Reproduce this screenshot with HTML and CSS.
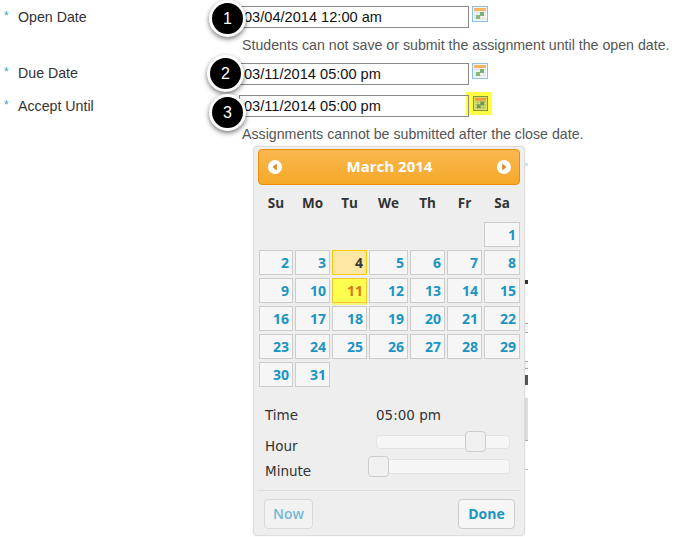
FILE: index.html
```html
<!DOCTYPE html>
<html>
<head>
  <meta charset="utf-8">
  <title>Assignment dates</title>
  <link rel="stylesheet" href="styles.css">
</head>
<body>
  <div class="form">
    <div class="row row-open">
      <div class="label"><span class="req">*</span>Open Date</div>
      <div class="field">
        <span class="date-box">03/04/2014 12:00 am</span>
        <svg class="cal-icon" viewBox="0 0 16 16"><use href="#cal"/></svg>
        <span class="callout callout-1">1</span>
      </div>
    </div>
    <p class="hint hint-open">Students can not save or submit the assignment until the open date.</p>

    <div class="row row-due">
      <div class="label"><span class="req">*</span>Due Date</div>
      <div class="field">
        <span class="date-box">03/11/2014 05:00 pm</span>
        <svg class="cal-icon" viewBox="0 0 16 16"><use href="#cal"/></svg>
        <span class="callout callout-2">2</span>
      </div>
    </div>

    <div class="row row-accept">
      <div class="label"><span class="req">*</span>Accept Until</div>
      <div class="field">
        <span class="date-box">03/11/2014 05:00 pm</span>
        <span class="cal-active"><svg class="cal-icon" viewBox="0 0 16 16"><use href="#cal-hot"/></svg></span>
        <span class="callout callout-3">3</span>
      </div>
    </div>
    <p class="hint hint-accept">Assignments cannot be submitted after the close date.</p>
  </div>

  <div class="peek"></div>

  <div class="picker">
    <div class="picker-head">
      <span class="nav"><svg viewBox="0 0 14 14"><circle cx="7" cy="7" r="7" fill="#fff"/><path d="M8.8 3.6v6.8L4.6 7z" fill="#d98a1c"/></svg></span>
      <span class="month">March 2014</span>
      <span class="nav"><svg viewBox="0 0 14 14"><circle cx="7" cy="7" r="7" fill="#fff"/><path d="M5.2 3.6v6.8L9.4 7z" fill="#d98a1c"/></svg></span>
    </div>

    <div class="weekdays">
      <span>Su</span><span>Mo</span><span>Tu</span><span>We</span><span>Th</span><span>Fr</span><span>Sa</span>
    </div>

    <div class="days">
      <span class="day day-first">1</span>
      <span class="day">2</span><span class="day">3</span><span class="day open-day">4</span><span class="day">5</span><span class="day">6</span><span class="day">7</span><span class="day">8</span>
      <span class="day">9</span><span class="day">10</span><span class="day today">11</span><span class="day">12</span><span class="day">13</span><span class="day">14</span><span class="day">15</span>
      <span class="day">16</span><span class="day">17</span><span class="day">18</span><span class="day">19</span><span class="day">20</span><span class="day">21</span><span class="day">22</span>
      <span class="day">23</span><span class="day">24</span><span class="day">25</span><span class="day">26</span><span class="day">27</span><span class="day">28</span><span class="day">29</span>
      <span class="day">30</span><span class="day">31</span>
    </div>

    <div class="time-row">
      <span class="time-label">Time</span>
      <span class="time-value">05:00 pm</span>
    </div>
    <div class="slider-row slider-hour">
      <span class="time-label">Hour</span>
      <span class="slider"><span class="thumb thumb-hour"></span></span>
    </div>
    <div class="slider-row slider-minute">
      <span class="time-label">Minute</span>
      <span class="slider"><span class="thumb thumb-minute"></span></span>
    </div>

    <div class="picker-foot">
      <span class="btn btn-now">Now</span>
      <span class="btn btn-done">Done</span>
    </div>
  </div>

  <svg class="defs" width="0" height="0">
    <symbol id="cal" viewBox="0 0 16 16">
      <rect x="0.5" y="0.5" width="15" height="15" fill="#f0f6fb" stroke="#8fc0ea"/>
      <rect x="2" y="2" width="12" height="3" fill="#f9b261"/>
      <path d="M2 6.5h12M2 9.5h12M2 12.5h12M5 5v9M8 5v9M11 5v9" stroke="#dfe4e6" stroke-width="1" fill="none"/>
      <rect x="4" y="9" width="4" height="4" fill="#86bb7c"/>
      <rect x="8" y="6" width="4" height="4" fill="#7cb372"/>
    </symbol>
    <symbol id="cal-hot" viewBox="0 0 16 16">
      <rect x="0.5" y="0.5" width="15" height="15" fill="#dde270" stroke="#7c9440"/>
      <rect x="2" y="2" width="12" height="3" fill="#f09a38"/>
      <path d="M2 6.5h12M2 9.5h12M2 12.5h12M5 5v9M8 5v9M11 5v9" stroke="#b9bb62" stroke-width="1" fill="none"/>
      <rect x="4" y="9" width="4" height="4" fill="#6a9c50"/>
      <rect x="8" y="6" width="4" height="4" fill="#6a9c50"/>
    </symbol>
  </svg>
</body>
</html>
```

FILE: styles.css
```css
html, body {
  margin: 0;
  padding: 0;
  height: 537px;
  overflow: hidden;
  background-color: #fff;
}
body {
  font-family: "Liberation Sans", Arial, sans-serif;
  font-size: 14.2px;
  color: #333;
  position: relative;
}
.defs {
  position: absolute;
}
.form {
  padding-top: 6px;
}
.row {
  display: flex;
  height: 22px;
  position: relative;
}
.row-due {
  margin-top: 10px;
}
.row-accept {
  margin-top: 10px;
}
.label {
  width: 239px;
  padding-left: 4px;
  box-sizing: border-box;
  line-height: 22px;
  color: #333;
}
.row-due .label {
  margin-top: -1px;
}
.req {
  display: inline-block;
  width: 14px;
  color: #3aa0d8;
  font-size: 12px;
  position: relative;
  top: -2px;
}
.field {
  display: flex;
  align-items: flex-start;
}
.date-box {
  position: relative;
  z-index: 1;
  width: 230px;
  height: 22px;
  box-sizing: border-box;
  border: 1px solid #8a8a8a;
  padding-left: 4px;
  font-size: 14.6px;
  line-height: 21px;
  color: #111;
}
.cal-icon {
  width: 16px;
  height: 16px;
  display: block;
  margin-left: 3px;
}
.cal-active {
  display: block;
  width: 26px;
  height: 23px;
  box-sizing: border-box;
  background: #ffff40;
  padding: 4px 0 0 7px;
  margin-top: -3px;
  margin-left: -3px;
}
.cal-active .cal-icon {
  margin-left: 0;
  width: 15px;
  height: 15px;
}
.callout {
  position: absolute;
  z-index: 2;
  width: 31px;
  height: 31px;
  border-radius: 50%;
  background: #000;
  border: 3px solid #fff;
  box-shadow: 0 2px 5px rgba(0,0,0,0.55);
  color: #fff;
  font-size: 16px;
  line-height: 31px;
  text-align: center;
}
.callout-1 { left: 209px; top: -6px; }
.callout-2 { left: 207px; top: -8px; }
.callout-3 { left: 209px; top: -1px; }
.hint {
  margin: 0;
  padding-left: 242px;
  line-height: 16px;
  color: #555;
  white-space: nowrap;
}
.hint-open {
  margin-top: 9px;
}
.hint-accept {
  margin-top: 9px;
}
.peek {
  position: absolute;
  left: 525px;
  top: 160px;
  width: 3px;
  height: 315px;
  background: linear-gradient(#fff 0 3px, #cfe6f5 3px 6px, #fff 6px 120px, #333 120px 124px, #fff 124px 163px, #aaa 163px 164px, #f4f4f4 164px 172px, #aaa 172px 173px, #fff 173px 201px, #aaa 201px 202px, #f4f4f4 202px 208px, #aaa 208px 209px, #fff 209px 215px, #555 215px 225px, #fff 225px 238px, #ddd 238px 280px, #aaa 280px 281px, #fff 281px 309px, #bbb 309px 310px, #fff 310px);
}
.picker {
  position: absolute;
  left: 253px;
  top: 146px;
  width: 272px;
  height: 390px;
  box-sizing: border-box;
  background: #eee;
  border: 1px solid #ddd;
  border-radius: 4px;
  padding: 2px 4px 0 4px;
  font-family: "DejaVu Sans", sans-serif;
  box-shadow: 0 0 2px rgba(0,0,0,0.1);
}
.picker-head {
  height: 36px;
  box-sizing: border-box;
  display: flex;
  align-items: center;
  justify-content: space-between;
  padding: 0 8px 0 9px;
  background: linear-gradient(#fbb850, #f6a828);
  border: 1px solid #e78f08;
  border-radius: 4px;
}
.nav svg {
  width: 14px;
  height: 14px;
  display: block;
}
.month {
  color: #fff;
  font-family: "Open Sans", sans-serif;
  font-weight: bold;
  font-size: 15px;
  padding-bottom: 2px;
}
.weekdays, .days {
  display: grid;
  grid-template-columns: 34px 35px 35px 39px 35px 35px 36px;
  column-gap: 2px;
  margin-left: 1px;
}
.weekdays {
  height: 37px;
  box-sizing: border-box;
  padding-bottom: 2px;
  align-items: center;
  font-family: "Open Sans", sans-serif;
  font-size: 13.5px;
  font-weight: bold;
  text-align: center;
  color: #333;
}
.days {
  grid-auto-rows: 25px;
  row-gap: 3px;
}
.day {
  box-sizing: border-box;
  border: 1px solid #ccc;
  background: #f6f6f6;
  color: #1c94c4;
  font-family: "Open Sans", sans-serif;
  font-weight: bold;
  font-size: 14px;
  line-height: 24px;
  text-align: right;
  padding-right: 3px;
}
.day-first {
  grid-column: 7;
}
.open-day {
  background: #fce7a4;
  border-color: #fbcb09;
  color: #363636;
}
.today {
  background: #ffff50;
  border-color: #f5c830;
  color: #e0701a;
  box-shadow: 0 2px 0 #f4f47a;
}
.time-row, .slider-row {
  display: flex;
  align-items: center;
  padding-left: 7px;
  color: #333;
}
.time-row {
  margin-top: 18px;
  height: 20px;
}
.time-label {
  width: 111px;
  font-size: 13.5px;
}
.time-value {
  font-size: 13.5px;
}
.slider-row {
  height: 25px;
}
.slider-hour {
  margin-top: 8px;
}
.slider {
  position: relative;
  width: 134px;
  height: 14px;
  margin-bottom: 8px;
  box-sizing: border-box;
  background: #f6f6f6;
  border: 1px solid #e3e3e3;
  border-radius: 4px;
}
.slider-minute .slider {
  height: 15px;
}
.thumb {
  position: absolute;
  top: -5px;
  width: 21px;
  height: 21px;
  box-sizing: border-box;
  background: #f0f0f0;
  border: 1px solid #ccc;
  border-radius: 4px;
}
.thumb-hour { left: 88px; }
.thumb-minute { left: -9px; top: -4px; }
.picker-foot {
  display: flex;
  justify-content: space-between;
  align-items: flex-start;
  margin-top: 7px;
  border-top: 1px solid #ddd;
  padding: 8px 5px 0 6px;
}
.btn {
  box-sizing: border-box;
  height: 30px;
  line-height: 28px;
  border: 1px solid #ccc;
  border-radius: 4px;
  background: #f6f6f6;
  color: #1c94c4;
  font-family: "Open Sans", sans-serif;
  font-size: 14px;
  text-align: center;
}
.btn-now {
  width: 49px;
  opacity: 0.6;
  font-weight: 600;
}
.btn-done {
  width: 57px;
  font-weight: bold;
}
```
